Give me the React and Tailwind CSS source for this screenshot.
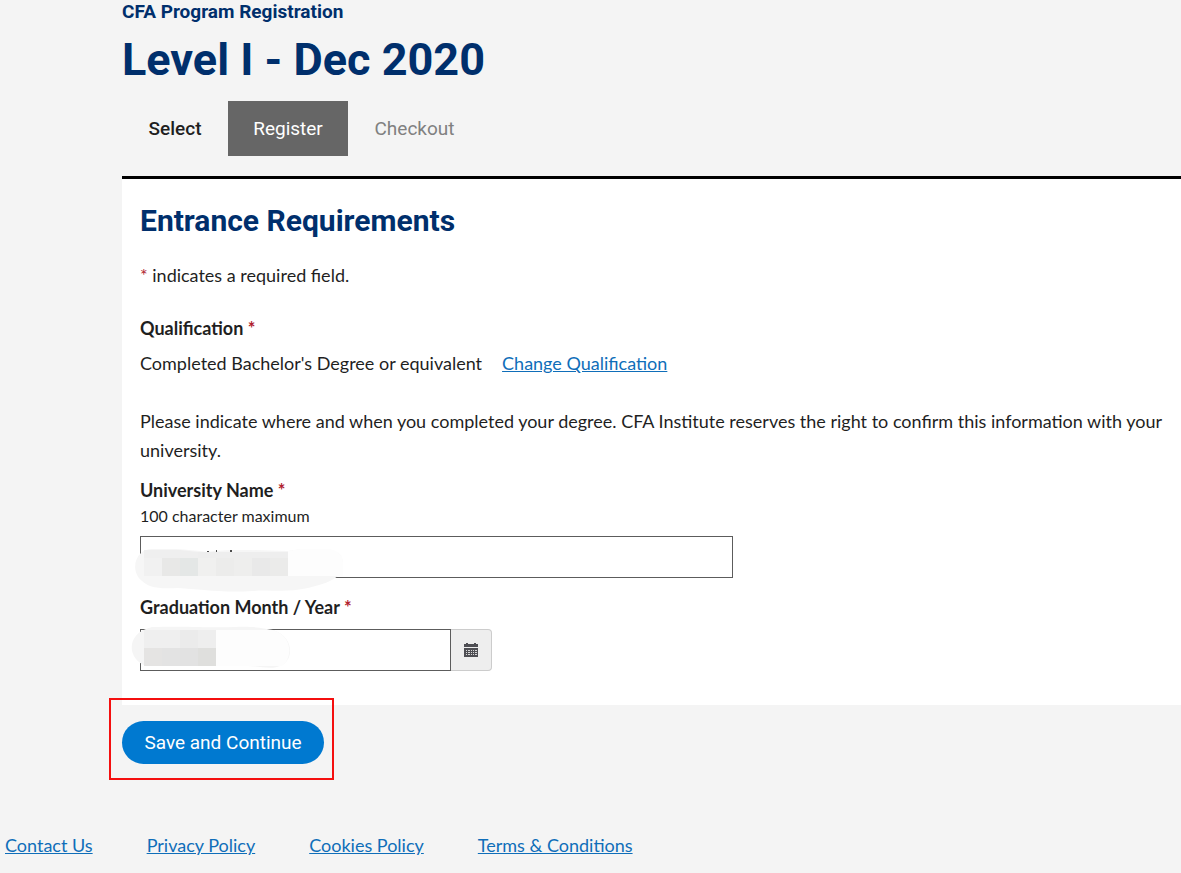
import React, { useState } from 'react';

const steps = [
  { name: 'Select', style: 'w-[106px] text-[#1f1f1f] font-medium' },
  { name: 'Register', style: 'w-[120px] bg-[#666666] text-white' },
  { name: 'Checkout', style: 'w-[133px] text-[#808080]' },
];

const footerLinks = ['Contact Us', 'Privacy Policy', 'Cookies Policy', 'Terms & Conditions'];

const Required = () => <span className="text-[#b01c2e]">*</span>;

const CalendarIcon = () => (
  <svg width="14" height="14" viewBox="0 0 14 14" fill="#4f4f54" aria-hidden="true">
    <path d="M0 1h2V0h2v1h6V0h2v1h2v3H0z" />
    <path d="M0 5h14v9H0z" />
    <path
      fill="#d8d8d8"
      d="M2 7h1v1H2zM4 7h2v1H4zM7 7h1v1H7zM9 7h1v1H9zM11 7h2v1h-2zM2 9h1v1H2zM4 9h2v1H4zM7 9h1v1H7zM9 9h1v1H9zM11 9h2v1h-2zM2 11h1v1H2zM4 11h2v1H4zM7 11h1v1H7zM9 11h1v1H9zM11 11h2v1h-2z"
    />
  </svg>
);

// Brushed masks that hide the personal values in the two fields
const UniversityMask = () => (
  <svg className="absolute -left-[5px] top-[13px] pointer-events-none" width="210" height="43" viewBox="0 0 210 43" aria-hidden="true">
    <path d="M17 0C40 -1 56 1 72 3C90 0 120 1 153 2C170 -1 208 -6 208 14C208 29 194 34 173 39C150 44 135 40 118 42C85 44 65 40 43 39C20 40 14 38 7 32C-2 25 -2 11 6 4C9 1 13 0 17 0Z" fill="#f6f6f6" />
    <path d="M153 2C175 -2 208 -6 208 14V27H153Z" fill="#fdfdfd" />
    <path d="M9 1H45L63 3V9H9z" fill="#efefef" />
    <path d="M63 3H153V9H63z" fill="#eeeeee" />
    <path d="M9 9h18v18H9z" fill="#f1f1f1" />
    <path d="M27 9h18v18H27z" fill="#e8e8e7" />
    <path d="M45 9h18v18H45z" fill="#e4e7e6" />
    <path d="M63 9h18v18H63z" fill="#f0f0ef" />
    <path d="M81 9h18v18H81z" fill="#ececeb" />
    <path d="M99 9h18v18H99z" fill="#eeeeed" />
    <path d="M117 9h18v18H117z" fill="#e9e9e9" />
    <path d="M135 9h18v18H135z" fill="#ebebea" />
    <path d="M72 2h2v1h-2zM81 1h1v2h-1zM95 1h2v2h-2z" fill="#4c4c4c" />
  </svg>
);

const DateMask = () => (
  <svg className="absolute -left-[10px] -top-[3px] pointer-events-none" width="162" height="44" viewBox="0 0 162 44" aria-hidden="true">
    <path d="M22 1C60 0 80 2 105 1C123 0 132 2 143 4C165 11 164 35 150 40C140 44 130 40 118 40H16C-3 33 -5 7 22 1Z" fill="#f5f5f5" />
    <path d="M86 4H143C164 11 162 33 152 40H86z" fill="#fdfdfd" />
    <path d="M14 4h36v18H14z" fill="#efefef" />
    <path d="M50 4h18v18H50z" fill="#ebebeb" />
    <path d="M68 4h18v18H68z" fill="#eeeeee" />
    <path d="M14 22h18v18H14z" fill="#e5e4e3" />
    <path d="M32 22h18v18H32z" fill="#e3e3e3" />
    <path d="M50 22h18v18H50z" fill="#e2e2e2" />
    <path d="M68 22h18v18H68z" fill="#dfdfdd" />
  </svg>
);

const App = () => {
  const [university, setUniversity] = useState('');
  const [graduation, setGraduation] = useState('');

  return (
    <div className="min-h-screen bg-[#f4f4f4] font-['Lato',sans-serif] text-lg leading-[29px] text-[#1f1f1f]">
      <main className="pl-[122px]">
        <header className="font-['Roboto',sans-serif]">
          <p className="text-[19px] leading-[23px] font-bold text-[#002f6c]">CFA Program Registration</p>
          <h1 className="mt-[13px] text-[45px] leading-12 font-bold text-[#002f6c]">Level I - Dec 2020</h1>
          <ol className="mt-[17px] flex h-[55px] text-[19px]">
            {steps.map((step) => (
              <li key={step.name} className={`flex items-center justify-center ${step.style}`}>
                {step.name}
              </li>
            ))}
          </ol>
        </header>

        <section className="mt-5 border-t-3 border-black bg-white px-[18px] pt-6 pb-[34px]">
          <h2 className="font-['Roboto',sans-serif] text-[30px] leading-9 font-bold text-[#002f6c]">
            Entrance Requirements
          </h2>
          <p className="mt-[22px]">
            <Required /> indicates a required field.
          </p>

          <h3 className="mt-6 leading-7 font-bold">
            Qualification <Required />
          </h3>
          <p className="mt-[7px] flex gap-5">
            Completed Bachelor's Degree or equivalent
            <a href="#qualification" className="text-[#0f6eb9] underline">Change Qualification</a>
          </p>
          <p className="mt-[29px]">
            Please indicate where and when you completed your degree. CFA Institute reserves the right to confirm
            this information with your university.
          </p>

          <label htmlFor="university" className="mt-[11px] block leading-7 font-bold">
            University Name <Required />
          </label>
          <p id="university-hint" className="text-base leading-6">100 character maximum</p>
          <div className="relative mt-2 max-w-[593px]">
            <input
              id="university"
              type="text"
              maxLength={100}
              aria-describedby="university-hint"
              value={university}
              onChange={(e) => setUniversity(e.target.value)}
              className="block h-[42px] w-full border border-[#5c5c5c] bg-white px-3"
            />
            <UniversityMask />
          </div>

          <label htmlFor="graduation" className="mt-[15px] block leading-7 font-bold">
            Graduation Month / Year <Required />
          </label>
          <div className="relative mt-2 flex max-w-[352px]">
            <input
              id="graduation"
              type="text"
              value={graduation}
              onChange={(e) => setGraduation(e.target.value)}
              className="h-[42px] min-w-0 flex-1 border border-[#5c5c5c] bg-white px-3"
            />
            <button
              type="button"
              aria-label="Choose date"
              className="flex w-[41px] items-center justify-center rounded-r border border-l-0 border-[#cccccc] bg-[#eeeeee]"
            >
              <CalendarIcon />
            </button>
            <DateMask />
          </div>
        </section>

        <div className="relative mt-4 flex">
          <button
            type="button"
            className="h-[43px] w-[202px] rounded-full bg-[#0079d0] font-['Roboto',sans-serif] text-[19px] text-white"
          >
            Save and Continue
          </button>
          <div className="pointer-events-none absolute -top-[23px] -left-[13px] h-[82px] w-[225px] border-2 border-[#f40f0f]" />
        </div>
      </main>

      <footer className="mt-[67px] pb-3 pl-[5px]">
        <nav className="flex gap-[54px]">
          {footerLinks.map((link) => (
            <a key={link} href="#" className="text-[#0f6eb9] underline">
              {link}
            </a>
          ))}
        </nav>
      </footer>
    </div>
  );
};

export default App;
